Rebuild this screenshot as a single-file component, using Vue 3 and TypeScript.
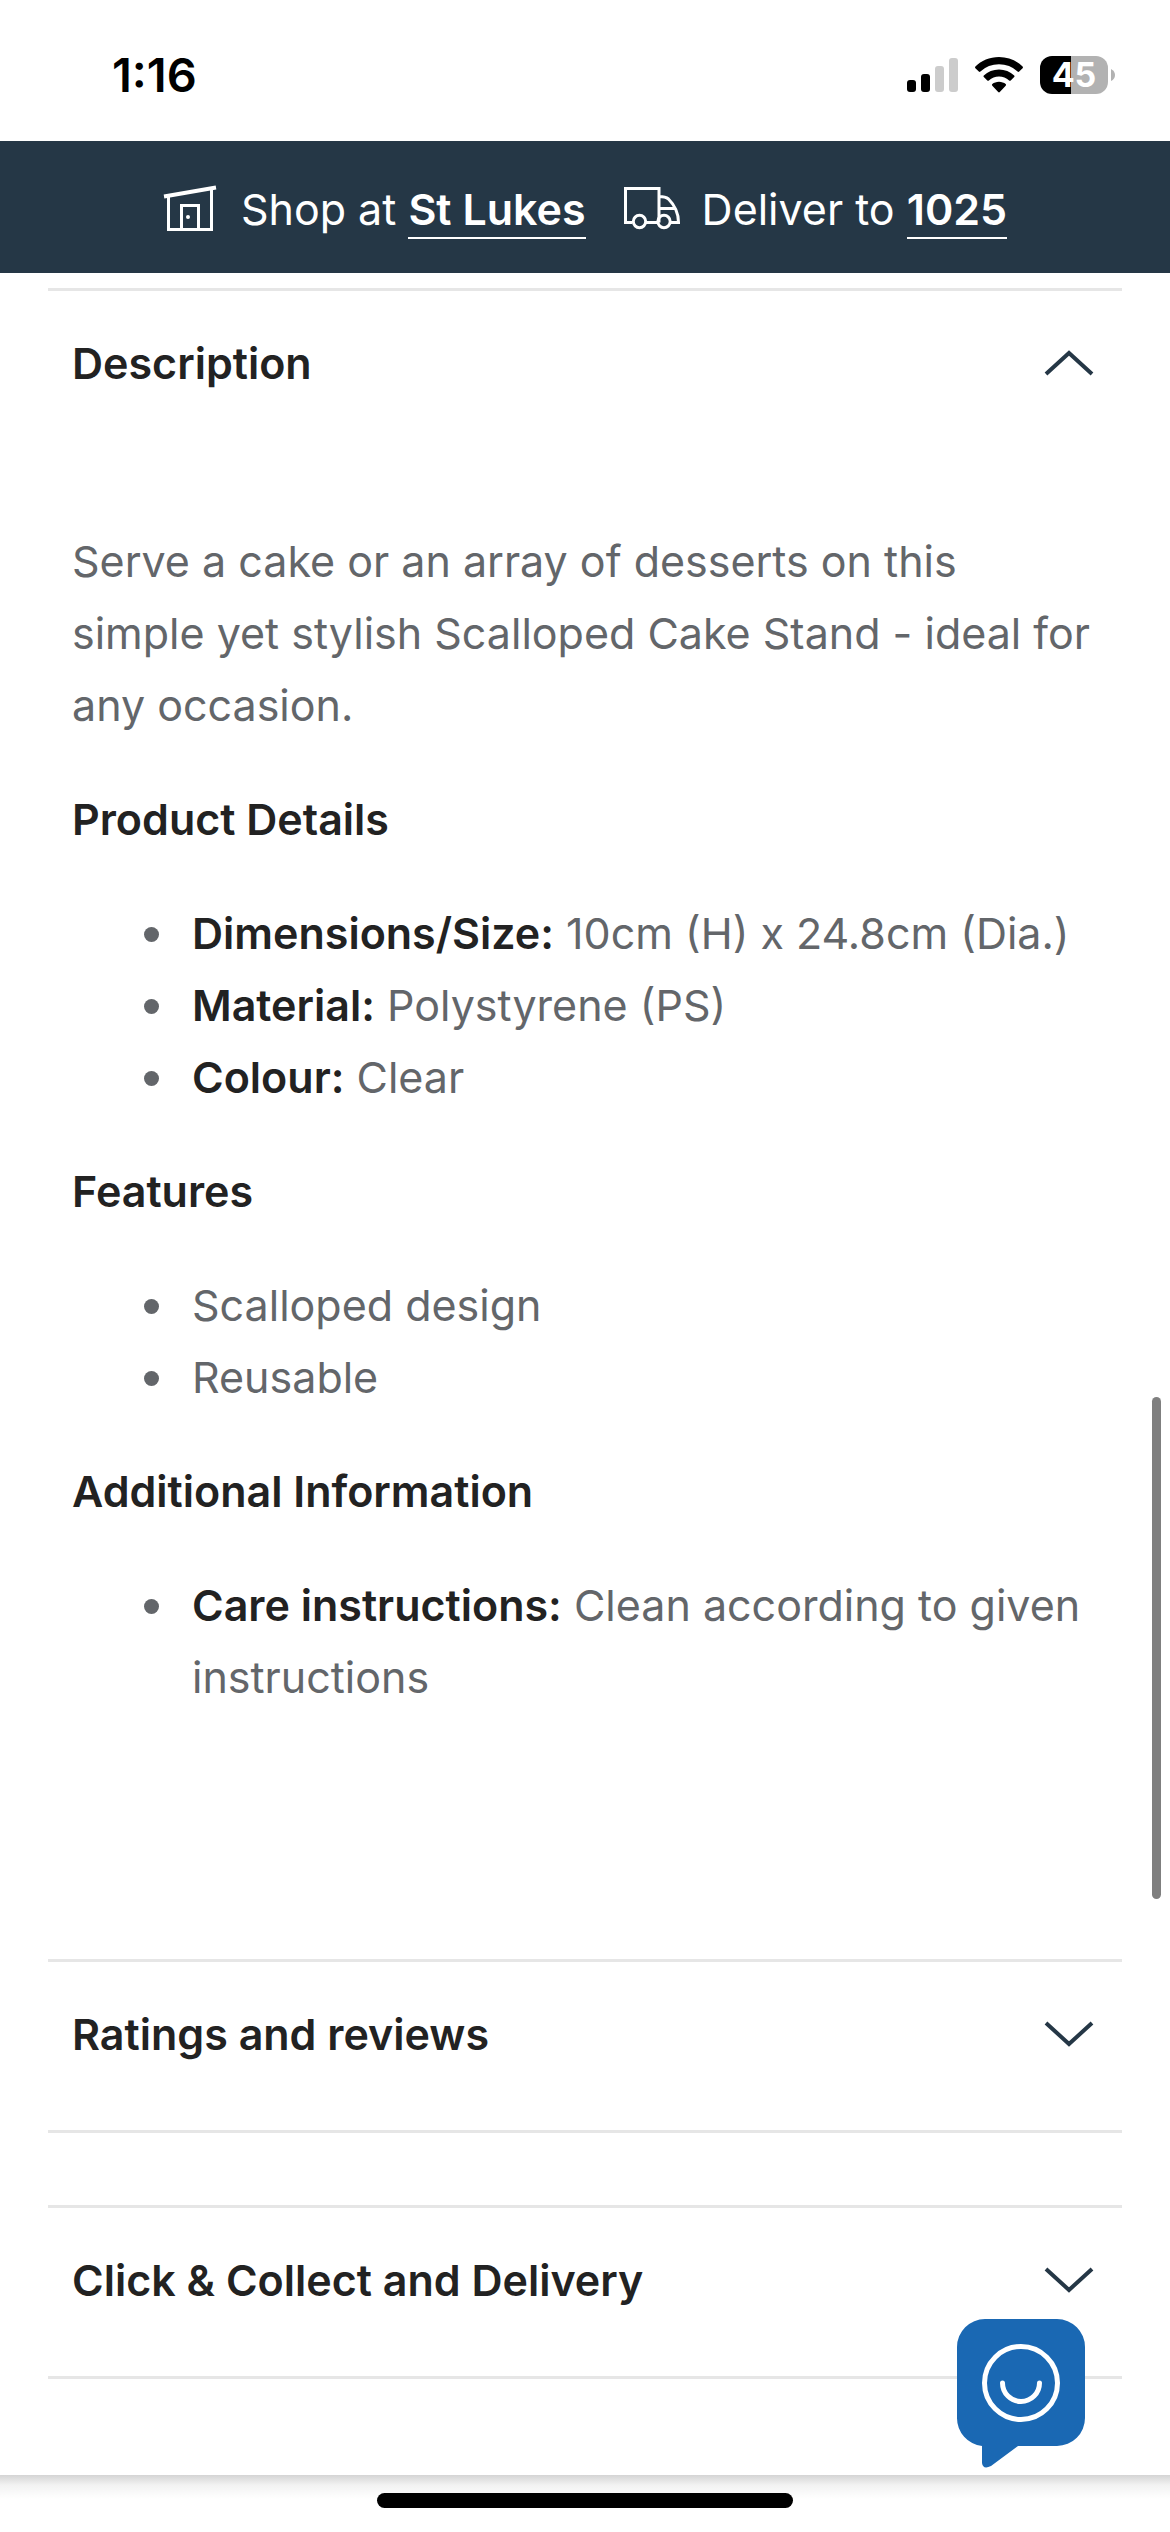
<script setup lang="ts">
import { ref } from 'vue'

interface Detail {
  label?: string
  text: string
}
interface Group {
  title: string
  items: Detail[]
}

const groups: Group[] = [
  {
    title: 'Product Details',
    items: [
      { label: 'Dimensions/Size:', text: '10cm (H) x 24.8cm (Dia.)' },
      { label: 'Material:', text: 'Polystyrene (PS)' },
      { label: 'Colour:', text: 'Clear' },
    ],
  },
  {
    title: 'Features',
    items: [{ text: 'Scalloped design' }, { text: 'Reusable' }],
  },
  {
    title: 'Additional Information',
    items: [{ label: 'Care instructions:', text: 'Clean according to given instructions' }],
  },
]

const descriptionOpen = ref(true)
const closedSections = ['Ratings and reviews', 'Click & Collect and Delivery']
</script>

<template>
  <div class="page">
    <header class="status">
      <time class="clock">1:16</time>
      <div class="indicators">
        <svg class="signal" viewBox="0 0 51 34" aria-hidden="true">
          <rect x="0" y="22" width="9" height="12" rx="3" />
          <rect x="14" y="16" width="9" height="18" rx="3" />
          <rect x="28" y="8" width="9" height="26" rx="3" fill="#ccc" />
          <rect x="42" y="0" width="9" height="34" rx="3" fill="#ccc" />
        </svg>
        <svg class="wifi" viewBox="0 0 48 36" aria-hidden="true">
          <path d="M24 0C33.400 0 41.800 3.600 47.600 9.600Q48.300 10.400 47.600 11.200L44.200 14.600Q43.400 15.300 42.600 14.600A27 27 0 0 0 5.400 14.600Q4.600 15.300 3.800 14.600L.4 11.200Q-.3 10.400.4 9.600C6.200 3.600 14.600 0 24 0Z" />
          <path d="M24 12.500C29.800 12.500 35.200 14.700 39.200 18.400Q40 19.200 39.200 20L35.700 23.400Q34.900 24.100 34.100 23.400A15 15 0 0 0 13.900 23.400Q13.100 24.100 12.300 23.400L8.800 20Q8 19.200 8.800 18.400C12.800 14.700 18.200 12.500 24 12.500Z" />
          <path d="M24 24.800C26.600 24.800 29 25.700 30.700 27.100Q31.500 27.900 30.700 28.700L24.800 35Q24 35.800 23.200 35L17.300 28.700Q16.500 27.900 17.300 27.100C19 25.700 21.400 24.800 24 24.800Z" />
        </svg>
        <div class="battery">
          <span class="level">45</span>
          <svg class="nub" viewBox="0 0 4 12" aria-hidden="true"><path d="M0 0Q4 2 4 6T0 12Z" fill="#b2b2b2" /></svg>
        </div>
      </div>
    </header>

    <nav class="locations">
      <div class="location">
        <svg class="icon" viewBox="0 0 56 48" aria-hidden="true">
          <path d="M1 11.500 53 2.500" stroke-width="4" />
          <path d="M5.500 11V44.500H48.500V4M18.500 44V20.500H35.500V44" />
          <circle cx="25" cy="32" r="2" fill="#fff" stroke="none" />
        </svg>
        <span>Shop at <a href="#store">St Lukes</a></span>
      </div>
      <div class="location">
        <svg class="icon" viewBox="0 0 56 48" aria-hidden="true">
          <path d="M8 37.500H1.500V3.500H35V37.500M22 37.500H33M47 37.500H54.500Q54.500 24 44.500 14Q41.500 11.500 35 11.500M35 23.500H51.500" />
          <circle cx="15.500" cy="36.500" r="6.200" />
          <circle cx="40" cy="36.500" r="6.200" />
        </svg>
        <span>Deliver to <a href="#postcode">1025</a></span>
      </div>
    </nav>

    <main class="sections">
      <section class="section first">
        <h2>
          <button type="button" class="toggle" :aria-expanded="descriptionOpen" @click="descriptionOpen = !descriptionOpen">
            Description
            <svg class="chevron" :class="{ up: descriptionOpen }" viewBox="0 0 50 26" aria-hidden="true"><path d="M2 2 25 23 48 2" /></svg>
          </button>
        </h2>
        <div v-if="descriptionOpen" class="panel">
          <p>Serve a cake or an array of desserts on this<br />simple yet stylish Scalloped Cake Stand - ideal for any occasion.</p>
          <template v-for="group in groups" :key="group.title">
            <h3>{{ group.title }}</h3>
            <ul>
              <li v-for="item in group.items" :key="item.text">
                <span v-if="item.label"><strong>{{ item.label }}</strong>{{ ' ' + item.text }}</span>
                <span v-else>{{ item.text }}</span>
              </li>
            </ul>
          </template>
        </div>
      </section>
      <section v-for="title in closedSections" :key="title" class="section closed">
        <h2>
          <button type="button" class="toggle" aria-expanded="false">
            {{ title }}
            <svg class="chevron" viewBox="0 0 50 26" aria-hidden="true"><path d="M2 2 25 23 48 2" /></svg>
          </button>
        </h2>
      </section>
    </main>

    <footer class="bottom"><div class="home"></div></footer>

    <div class="scrollbar"></div>
    <button type="button" class="chat" aria-label="Open chat">
      <svg viewBox="0 0 128 150" aria-hidden="true">
        <path d="M28 0H100A28 28 0 0 1 128 28V99A28 28 0 0 1 100 127H61L34 147Q26 151 25 144V127A28 28 0 0 1 0 99V28A28 28 0 0 1 28 0Z" fill="#1a68b3" />
        <circle cx="64" cy="64" r="36.500" />
        <path d="M45.500 64A18.500 18.500 0 0 0 82.500 64" stroke-linecap="round" />
      </svg>
    </button>
  </div>
</template>

<style>
body {
  margin: 0;
  background: #fff;
}
</style>

<style scoped>
.page {
  position: relative;
  display: flex;
  flex-direction: column;
  min-height: 100vh;
  font-family: Inter, "Liberation Sans", sans-serif;
  font-size: 43px;
  line-height: 72px;
  color: #63666a;
}
.status {
  box-sizing: border-box;
  display: flex;
  align-items: center;
  justify-content: space-between;
  height: 141px;
  padding: 8px 55px 0 112px;
  color: #000;
}
.clock {
  font-size: 47px;
  font-weight: 600;
}
.indicators {
  display: flex;
  align-items: center;
  gap: 17px;
}
.signal {
  width: 51px;
  height: 34px;
}
.wifi {
  width: 48px;
  height: 36px;
}
.battery {
  display: flex;
  align-items: center;
  gap: 3px;
}
.level {
  width: 68px;
  border-radius: 12px;
  background: linear-gradient(90deg, #000 45%, #b2b2b2 45%);
  color: #fff;
  font-size: 34px;
  font-weight: 700;
  line-height: 38px;
  text-align: center;
}
.nub {
  width: 4px;
  height: 12px;
}
.locations {
  box-sizing: border-box;
  display: flex;
  align-items: center;
  justify-content: center;
  gap: 38px;
  height: 132px;
  padding-top: 4px;
  background: #253746;
  color: #fff;
}
.location {
  display: flex;
  align-items: center;
  gap: 22px;
}
.location a {
  display: inline-block;
  border-bottom: 2px solid #fff;
  color: #fff;
  font-weight: 600;
  line-height: 56px;
  text-decoration: none;
}
.icon {
  width: 56px;
  height: 48px;
  fill: none;
  stroke: #fff;
  stroke-width: 3;
}
.sections {
  flex: 1;
  padding: 15px 48px 96px;
}
.section {
  border-top: 3px solid #e6e6e6;
  padding: 36px 24px 60px;
}
.first {
  padding-bottom: 246px;
}
.closed {
  border-bottom: 3px solid #e6e6e6;
}
.closed + .closed {
  margin-top: 72px;
}
h2,
h3,
p,
ul {
  margin: 0;
  font-size: inherit;
}
.toggle {
  display: flex;
  align-items: center;
  justify-content: space-between;
  width: 100%;
  padding: 0 4px 0 0;
  border: 0;
  background: none;
  color: #222;
  font: inherit;
  font-weight: 600;
  text-align: left;
}
.chevron {
  width: 50px;
  height: 26px;
  fill: none;
  stroke: #253746;
  stroke-width: 4;
}
.up {
  transform: rotate(180deg);
}
.panel {
  display: flex;
  flex-direction: column;
  gap: 42px;
  padding-top: 126px;
}
h3,
strong {
  color: #222;
  font-weight: 600;
}
ul {
  padding: 0 0 0 72px;
  list-style: none;
}
li {
  display: flex;
  gap: 33px;
}
li::before {
  content: "";
  flex: none;
  width: 15px;
  height: 15px;
  margin-top: 30px;
  border-radius: 50%;
  background: #63666a;
}
.bottom {
  box-sizing: border-box;
  height: 57px;
  padding-top: 18px;
  background: linear-gradient(#d4d4d4, #f2f2f2 10px, #fff 24px);
}
.home {
  width: 416px;
  height: 15px;
  margin: 0 auto;
  border-radius: 8px;
  background: #000;
}
.scrollbar {
  position: absolute;
  top: 1397px;
  right: 9px;
  width: 9px;
  height: 502px;
  border-radius: 5px;
  background: #7f7f7f;
}
.chat {
  position: absolute;
  right: 85px;
  bottom: 63px;
  width: 128px;
  height: 150px;
  padding: 0;
  border: 0;
  background: none;
}
.chat svg {
  display: block;
  fill: none;
  stroke: none;
}
.chat circle,
.chat path + circle + path {
  stroke: #fff;
  stroke-width: 5;
}
</style>
